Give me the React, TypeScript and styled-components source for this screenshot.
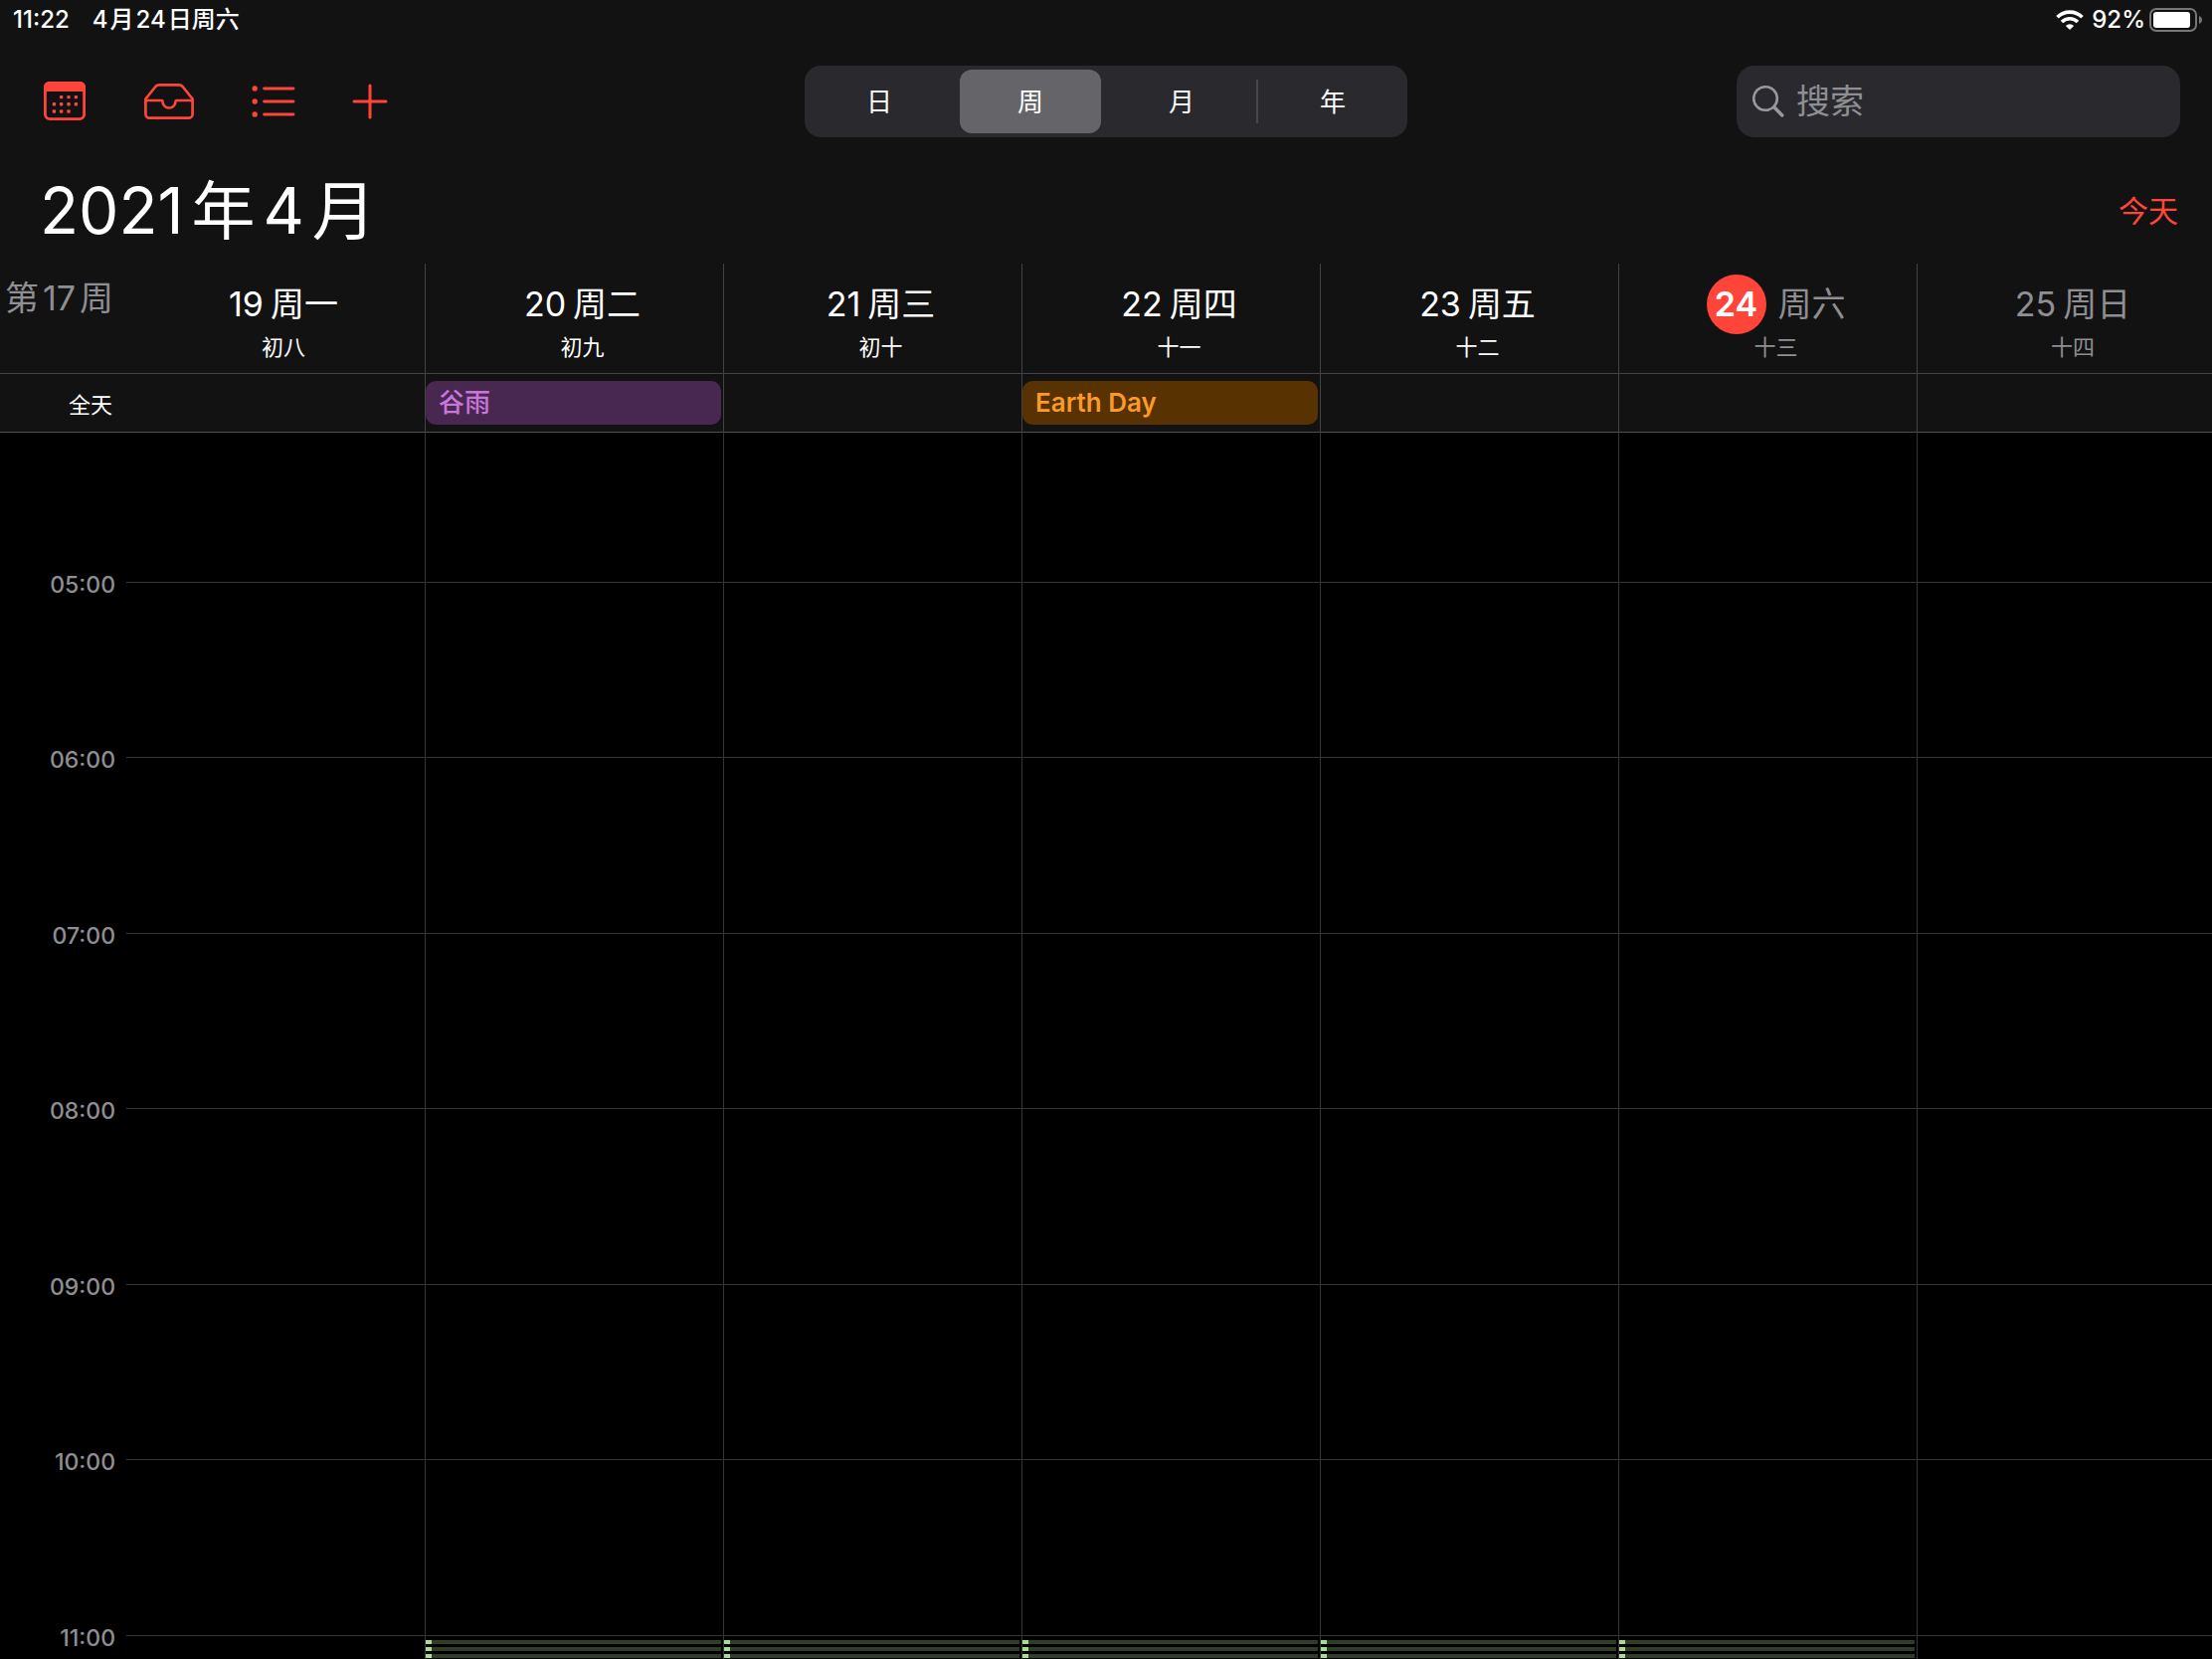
import React from "react";
import styled, { createGlobalStyle, css } from "styled-components";

const color = {
  chrome: "#121212",
  body: "#000000",
  accent: "#ff453a",
  text: "#ffffff",
  muted: "#8e8e93",
  field: "#2a2a2e",
  selected: "#656569",
  headerLine: "#434345",
  strongLine: "#515153",
  gridLine: "#363638",
};

const weekColumns = "127px repeat(6, minmax(0, 300fr)) minmax(0, 297fr)";

const GlobalStyle = createGlobalStyle`
  *, *::before, *::after { box-sizing: border-box; }
  html, body { margin: 0; background: ${color.body}; }
  body, button, input {
    font-family: Inter, "Noto Sans CJK SC", sans-serif;
  }
  button {
    margin: 0;
    padding: 0;
    border: 0;
    background: none;
    color: inherit;
    cursor: pointer;
  }
`;

const Screen = styled.div`
  display: flex;
  flex-direction: column;
  height: 100vh;
  overflow: hidden;
  color: ${color.text};
  background: ${color.body};
`;

const Chrome = styled.header`
  flex: none;
  background: ${color.chrome};
`;

const StatusBar = styled.div`
  display: flex;
  justify-content: space-between;
  align-items: center;
  height: 40px;
  padding: 0 9px 0 13px;
  font-size: 24px;
  line-height: 40px;
  font-weight: 500;
`;

const StatusGroup = styled.div<{ $gap: number }>`
  display: flex;
  align-items: center;
  gap: ${(p) => p.$gap}px;
`;

/* Text that mixes digits and Han characters, with a little air between the two scripts. */
const Mixed = styled.span<{ $gap: number }>`
  display: inline-flex;
  gap: ${(p) => p.$gap}px;
  white-space: nowrap;
`;

const Toolbar = styled.div`
  display: grid;
  grid-template-columns: 1fr auto 1fr;
  align-items: center;
  padding: 26px 32px 0;
`;

const Tools = styled.nav`
  display: flex;
  align-items: center;
  gap: 57px;
  padding-left: 11px;
  color: ${color.accent};
`;

const ToolButton = styled.button`
  display: grid;
  place-items: center;
  height: 52px;

  svg { display: block; }
`;

const Segments = styled.div`
  display: flex;
  gap: 10px;
  padding: 4px;
  border-radius: 16px;
  background: ${color.field};
`;

const Segment = styled.button<{ $selected?: boolean; $divider?: boolean }>`
  position: relative;
  width: 142px;
  height: 64px;
  padding-bottom: 3px;
  border-radius: 12px;
  font-size: 26px;
  background: ${(p) => (p.$selected ? color.selected : "transparent")};

  ${(p) =>
    p.$divider &&
    css`
      &::before {
        content: "";
        position: absolute;
        left: -6px;
        top: 10px;
        bottom: 10px;
        width: 2px;
        background: #47474b;
      }
    `}
`;

const SearchField = styled.label`
  display: flex;
  justify-self: end;
  align-items: center;
  gap: 12px;
  width: 446px;
  height: 72px;
  padding: 0 16px;
  border-radius: 18px;
  color: #98989f;
  background: ${color.field};

  svg { flex: none; }
`;

const SearchInput = styled.input`
  flex: 1;
  min-width: 0;
  padding: 0;
  border: 0;
  outline: 0;
  background: none;
  color: ${color.text};
  font-size: 34px;
  line-height: 48px;

  &::placeholder { color: ${color.muted}; opacity: 1; }
`;

const TitleRow = styled.div`
  display: flex;
  justify-content: space-between;
  align-items: center;
  height: 127px;
  padding: 20px 34px 0 40px;
`;

const Title = styled.h1`
  margin: 0;
  font-size: 64px;
  line-height: 96px;
  font-weight: 400;
`;

const TodayButton = styled.button`
  color: ${color.accent};
  font-size: 30px;
  line-height: 44px;
`;

const WeekRow = styled.div`
  display: grid;
  grid-template-columns: ${weekColumns};
  height: 111px;
  border-bottom: 1px solid ${color.headerLine};
`;

const columnLine = (line: string) => css`
  &:nth-child(n + 3) { border-left: 1px solid ${line}; }
`;

const WeekNumber = styled.div`
  padding: 10px 0 0 5px;
  color: ${color.muted};
  font-size: 34px;
  line-height: 50px;
  white-space: nowrap;
`;

const DayHead = styled.div<{ $muted?: boolean }>`
  display: flex;
  flex-direction: column;
  align-items: center;
  padding: 11px 0 0 16px;
  color: ${(p) => (p.$muted ? color.muted : color.text)};
  ${columnLine(color.headerLine)}
`;

const DayName = styled.div`
  display: flex;
  align-items: center;
  gap: 7px;
  height: 60px;
  font-size: 34px;
  line-height: 60px;
`;

const TodayBadge = styled.span`
  width: 60px;
  height: 60px;
  margin-right: 5px;
  border-radius: 50%;
  color: ${color.text};
  background: ${color.accent};
  font-weight: 600;
  text-align: center;
`;

const Lunar = styled.div`
  font-size: 22px;
  line-height: 26px;
`;

const AllDayRow = styled.div`
  display: grid;
  grid-template-columns: ${weekColumns};
  height: 59px;
  border-bottom: 1px solid ${color.strongLine};
`;

const AllDayLabel = styled.div`
  padding-right: 14px;
  font-size: 22px;
  line-height: 62px;
  text-align: right;
`;

const AllDayCell = styled.div`
  padding: 7px 2px 0 0;
  ${columnLine(color.headerLine)}
`;

const AllDayEvent = styled.button<{ $ink: string; $fill: string; $weight: number }>`
  display: block;
  width: 100%;
  height: 44px;
  padding: 0 13px;
  border-radius: 10px;
  color: ${(p) => p.$ink};
  background: ${(p) => p.$fill};
  font-size: 26px;
  line-height: 44px;
  font-weight: ${(p) => p.$weight};
  text-align: left;
`;

const Timeline = styled.main`
  flex: 1;
  min-height: 0;
  overflow: hidden;
`;

const HourRow = styled.div<{ $lead?: boolean }>`
  display: grid;
  grid-template-columns: ${weekColumns};
  height: ${(p) => (p.$lead ? 150 : 177)}px;

  &:nth-child(even) { height: 176px; }
`;

const HourLabel = styled.div`
  height: 24px;
  margin-top: -9px;
  padding-right: 11px;
  color: ${color.muted};
  font-size: 23px;
  line-height: 24px;
  font-weight: 500;
  text-align: right;
`;

const HourCell = styled.div<{ $lead?: boolean }>`
  padding: 4px 2px 0 0;
  border-top: ${(p) => (p.$lead ? "0" : `1px solid ${color.gridLine}`)};
  ${columnLine(color.gridLine)}
`;

const StripedEvent = styled.div`
  height: 100%;
  background:
    repeating-linear-gradient(transparent 0 4px, ${color.body} 4px 7px),
    linear-gradient(90deg, #a9dc95 6px, #303e29 6px);
`;

const CalendarIcon = () => (
  <svg width="44" height="42" viewBox="0 0 44 42" fill="none">
    <rect x="2.4" y="2.4" width="39.2" height="36.2" rx="4.5" stroke="currentColor" strokeWidth="2.8" />
    <path d="M1 11V6.500a5.500 5.500 0 0 1 5.500-5.500h31a5.500 5.500 0 0 1 5.500 5.500V11Z" fill="currentColor" />
    {[
      [18.6, 16.6], [26, 16.6], [33.400, 16.6],
      [11.400, 23.8], [18.6, 23.8], [26, 23.8], [33.400, 23.8],
      [11.400, 31], [18.6, 31], [26, 31],
    ].map(([x, y]) => (
      <rect key={`${x}-${y}`} x={x - 1.7} y={y - 1.7} width="3.4" height="3.4" rx="1" fill="currentColor" />
    ))}
  </svg>
);

const InboxIcon = () => (
  <svg width="52" height="38" viewBox="0 0 52 38" fill="none" stroke="currentColor" strokeWidth="2.7" strokeLinejoin="round">
    <path d="M2.400 16.500 12.400 4q1.500-1.700 3.800-1.700h19.600q2.300 0 3.800 1.700l10 12.500v15.200a4 4 0 0 1-4 4H6.400a4 4 0 0 1-4-4Z" />
    <path d="M2.400 18h16.100q1 0 1 1a6.500 6.500 0 0 0 13 0q0-1 1-1h16.100" />
  </svg>
);

const ListIcon = () => (
  <svg width="44" height="34" viewBox="0 0 44 34" fill="none" stroke="currentColor" strokeWidth="2.8" strokeLinecap="round">
    {[4, 17, 30].map((y) => (
      <g key={y}>
        <circle cx="3.200" cy={y} r="2.700" fill="currentColor" stroke="none" />
        <path d={`M12.500 ${y}H42`} />
      </g>
    ))}
  </svg>
);

const PlusIcon = () => (
  <svg width="36" height="36" viewBox="0 0 36 36" fill="none" stroke="currentColor" strokeWidth="3" strokeLinecap="round">
    <path d="M18 2V34M2 18H34" />
  </svg>
);

const SearchIcon = () => (
  <svg width="32" height="34" viewBox="0 0 32 34" fill="none" stroke="currentColor" strokeLinecap="round">
    <circle cx="13" cy="14" r="11.800" strokeWidth="2.600" />
    <path d="M21.800 22.800 29.800 31" strokeWidth="3.400" />
  </svg>
);

const WifiIcon = () => (
  <svg width="28" height="20" viewBox="0 0 28 20" fill="none" stroke="currentColor" strokeWidth="3.600">
    <path d="M1.500 7.300a17.700 17.700 0 0 1 25 0" />
    <path d="M6 12a11.400 11.400 0 0 1 16 0" />
    <path d="M14 20 9.900 15.900a5.800 5.800 0 0 1 8.200 0Z" fill="currentColor" stroke="none" />
  </svg>
);

const BatteryIcon = () => (
  <svg width="54" height="24" viewBox="0 0 54 24">
    <rect x="1" y="1" width="46" height="22" rx="6" fill="none" stroke="#77777a" strokeWidth="2" />
    <rect x="4" y="4" width="37" height="16" rx="3" fill="currentColor" />
    <path d="M50 8q3 1.200 3 4t-3 4Z" fill="#77777a" />
  </svg>
);

const tools = [
  { label: "日历", Icon: CalendarIcon },
  { label: "收件箱", Icon: InboxIcon },
  { label: "列表", Icon: ListIcon },
  { label: "新建", Icon: PlusIcon },
];

const views = ["日", "周", "月", "年"];

type Day = {
  date: string;
  name: string;
  lunar: string;
  muted?: boolean;
  today?: boolean;
  allDay?: { title: string; ink: string; fill: string; weight: number };
  morning?: boolean;
};

const days: Day[] = [
  { date: "19", name: "周一", lunar: "初八" },
  { date: "20", name: "周二", lunar: "初九", morning: true, allDay: { title: "谷雨", ink: "#c975de", fill: "#482850", weight: 500 } },
  { date: "21", name: "周三", lunar: "初十", morning: true },
  { date: "22", name: "周四", lunar: "十一", morning: true, allDay: { title: "Earth Day", ink: "#f99a2a", fill: "#583200", weight: 600 } },
  { date: "23", name: "周五", lunar: "十二", morning: true },
  { date: "24", name: "周六", lunar: "十三", morning: true, muted: true, today: true },
  { date: "25", name: "周日", lunar: "十四", muted: true },
];

const hours = ["", "05:00", "06:00", "07:00", "08:00", "09:00", "10:00", "11:00"];

const MixedText = ({ text, gap }: { text: string; gap: number }) => (
  <Mixed $gap={gap}>
    {(text.match(/\d+|\D+/g) ?? []).map((part, i) => (
      <span key={i}>{part}</span>
    ))}
  </Mixed>
);

export default function App() {
  return (
    <Screen>
      <GlobalStyle />
      <Chrome>
        <StatusBar>
          <StatusGroup $gap={23}>
            <span>11:22</span>
            <MixedText text="4月24日周六" gap={2} />
          </StatusGroup>
          <StatusGroup $gap={8}>
            <WifiIcon />
            <StatusGroup $gap={4}>
              <span>92%</span>
              <BatteryIcon />
            </StatusGroup>
          </StatusGroup>
        </StatusBar>

        <Toolbar>
          <Tools>
            {tools.map(({ label, Icon }) => (
              <ToolButton key={label} type="button" aria-label={label}>
                <Icon />
              </ToolButton>
            ))}
          </Tools>
          <Segments>
            {views.map((view) => (
              <Segment
                key={view}
                type="button"
                aria-pressed={view === "周"}
                $selected={view === "周"}
                $divider={view === "年"}
              >
                {view}
              </Segment>
            ))}
          </Segments>
          <SearchField>
            <SearchIcon />
            <SearchInput type="text" placeholder="搜索" aria-label="搜索" />
          </SearchField>
        </Toolbar>

        <TitleRow>
          <Title>
            <MixedText text="2021年4月" gap={8} />
          </Title>
          <TodayButton type="button">今天</TodayButton>
        </TitleRow>

        <WeekRow>
          <WeekNumber>
            <MixedText text="第17周" gap={4} />
          </WeekNumber>
          {days.map((day) => (
            <DayHead key={day.date} $muted={day.muted}>
              <DayName>
                {day.today ? <TodayBadge>{day.date}</TodayBadge> : <span>{day.date}</span>}
                <span>{day.name}</span>
              </DayName>
              <Lunar>{day.lunar}</Lunar>
            </DayHead>
          ))}
        </WeekRow>

        <AllDayRow>
          <AllDayLabel>全天</AllDayLabel>
          {days.map((day) => (
            <AllDayCell key={day.date}>
              {day.allDay && (
                <AllDayEvent
                  type="button"
                  $ink={day.allDay.ink}
                  $fill={day.allDay.fill}
                  $weight={day.allDay.weight}
                >
                  {day.allDay.title}
                </AllDayEvent>
              )}
            </AllDayCell>
          ))}
        </AllDayRow>
      </Chrome>

      <Timeline>
        {hours.map((hour) => (
          <HourRow key={hour} $lead={!hour}>
            <HourLabel>{hour}</HourLabel>
            {days.map((day) => (
              <HourCell key={day.date} $lead={!hour}>
                {hour === "11:00" && day.morning && <StripedEvent />}
              </HourCell>
            ))}
          </HourRow>
        ))}
      </Timeline>
    </Screen>
  );
}
